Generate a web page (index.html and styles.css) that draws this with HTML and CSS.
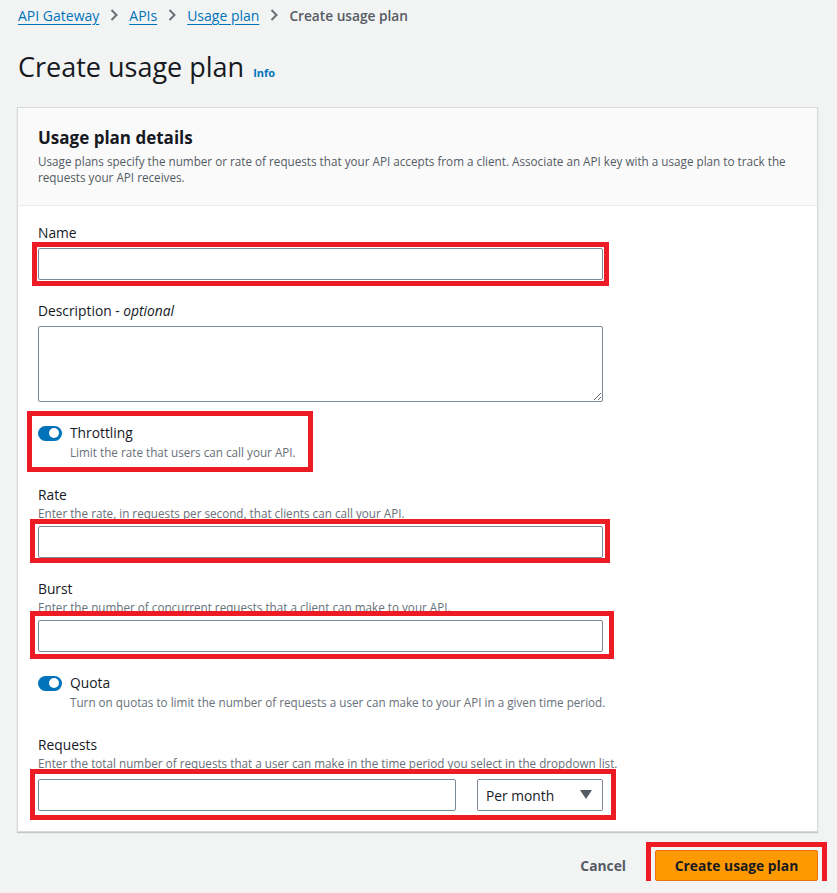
FILE: index.html
```html
<!DOCTYPE html>
<html lang="en">
<head>
<meta charset="utf-8">
<title>Create usage plan</title>
<link rel="stylesheet" href="styles.css">
</head>
<body>
<div class="page">
  <nav class="crumbs">
    <a class="crumb-link" href="#">API Gateway</a>
    <svg class="chev" viewBox="0 0 8 12" width="8" height="12"><path d="M1.5 1 L6.5 6 L1.5 11" fill="none" stroke="#687078" stroke-width="2"/></svg>
    <a class="crumb-link" href="#">APIs</a>
    <svg class="chev" viewBox="0 0 8 12" width="8" height="12"><path d="M1.5 1 L6.5 6 L1.5 11" fill="none" stroke="#687078" stroke-width="2"/></svg>
    <a class="crumb-link" href="#">Usage plan</a>
    <svg class="chev" viewBox="0 0 8 12" width="8" height="12"><path d="M1.5 1 L6.5 6 L1.5 11" fill="none" stroke="#687078" stroke-width="2"/></svg>
    <span class="crumb-current">Create usage plan</span>
  </nav>

  <header class="page-head">
    <h1 class="page-title">Create usage plan</h1>
    <a class="info" href="#">Info</a>
  </header>

  <section class="card">
    <div class="card-head">
      <h2 class="card-title">Usage plan details</h2>
      <p class="card-desc">Usage plans specify the number or rate of requests that your API accepts from a client. Associate an API key with a usage plan to track the requests your API receives.</p>
    </div>
    <div class="card-body">
      <div class="field">
        <label class="label">Name</label>
        <div class="mark mark-name"><input class="input" type="text"></div>
      </div>

      <div class="field">
        <label class="label">Description - <i>optional</i></label>
        <textarea class="textarea"></textarea>
      </div>

      <div class="toggle-field">
        <div class="mark mark-throttle">
          <div class="toggle-row">
            <span class="toggle"><span class="knob"></span></span>
            <span class="toggle-label">Throttling</span>
          </div>
          <div class="toggle-desc">Limit the rate that users can call your API.</div>
        </div>
      </div>

      <div class="field">
        <label class="label">Rate</label>
        <div class="hint">Enter the rate, in requests per second, that clients can call your API.</div>
        <div class="mark mark-rate"><input class="input" type="text"></div>
      </div>

      <div class="field">
        <label class="label">Burst</label>
        <div class="hint">Enter the number of concurrent requests that a client can make to your API.</div>
        <div class="mark mark-burst"><input class="input" type="text"></div>
      </div>

      <div class="toggle-field">
        <div class="toggle-row">
          <span class="toggle"><span class="knob"></span></span>
          <span class="toggle-label">Quota</span>
        </div>
        <div class="toggle-desc">Turn on quotas to limit the number of requests a user can make to your API in a given time period.</div>
      </div>

      <div class="field">
        <label class="label">Requests</label>
        <div class="hint">Enter the total number of requests that a user can make in the time period you select in the dropdown list.</div>
        <div class="mark mark-req">
          <div class="req-row">
            <input class="input input-req" type="text">
            <div class="select">
              <span>Per month</span>
              <svg viewBox="0 0 12 10" width="12" height="10"><path d="M0 0 H12 L6 9 Z" fill="#545b64"/></svg>
            </div>
          </div>
        </div>
      </div>
    </div>
  </section>

  <footer class="actions">
    <button class="btn-cancel" type="button">Cancel</button>
    <div class="mark mark-btn"><button class="btn-primary" type="button">Create usage plan</button></div>
  </footer>
</div>
</body>
</html>
```

FILE: styles.css
```css
*, *::before, *::after { box-sizing: border-box; }
html, body { margin: 0; padding: 0; }
body {
  background: #f2f3f3;
  font-family: "Open Sans", "Noto Sans", Arial, sans-serif;
  color: #16191f;
  font-size: 14px;
}
.page {
  padding: 3px 19px 0 17px;
}
.crumbs {
  display: flex;
  align-items: center;
  gap: 11px;
  height: 24px;
  padding-left: 1px;
  font-size: 14px;
}
.crumb-link {
  color: #0073bb;
  text-decoration: underline;
  text-underline-offset: 3px;
}
.chev { display: block; }
.crumb-current {
  color: #545b64;
  font-weight: 600;
  font-size: 13.7px;
}
.page-head {
  display: flex;
  align-items: baseline;
  gap: 9px;
  margin-top: 22px;
  padding-left: 1px;
}
.page-title {
  margin: 0;
  font-size: 27px;
  font-weight: 400;
  line-height: 36px;
  color: #16191f;
}
.info {
  color: #0073bb;
  font-size: 11px;
  font-weight: 700;
  text-decoration: none;
}
.card {
  margin-top: 22px;
  background: #fff;
  border: 1px solid #d5dbdb;
  box-shadow: 0 1px 1px 0 rgba(0, 28, 36, 0.2);
}
.card-head {
  background: #fafafa;
  border-bottom: 1px solid #eaeded;
  padding: 18px 20px 20px;
}
.card-title {
  margin: 0;
  font-size: 17px;
  font-weight: 700;
  line-height: 24px;
}
.card-desc {
  margin: 3px 0 0;
  font-size: 11.7px;
  line-height: 16px;
  color: #545b64;
}
.card-body {
  padding: 17px 20px 20px;
  display: flex;
  flex-direction: column;
  gap: 21px;
}
.field {
  display: flex;
  flex-direction: column;
}
.label {
  font-size: 13.8px;
  line-height: 20px;
  color: #16191f;
}
.hint {
  font-size: 11.7px;
  line-height: 16px;
  color: #687078;
}
.input {
  display: block;
  width: 565px;
  height: 32px;
  border: 1px solid #7d8998;
  border-radius: 2px;
  background: #fff;
  font: inherit;
  padding: 4px 9px;
}
.field > .label + .mark,
.field > .hint + .mark,
.field > .label + .textarea { margin-top: 5px; }
.field > .hint + .mark-req { margin-top: 8px; }
.textarea {
  display: block;
  width: 565px;
  height: 76px;
  border: 1px solid #7d8998;
  border-radius: 2px;
  font: inherit;
  resize: vertical;
}
.toggle-field {
  display: flex;
  flex-direction: column;
  margin-bottom: 4px;
}
.toggle-row {
  display: flex;
  align-items: center;
  gap: 8px;
  height: 20px;
}
.toggle {
  position: relative;
  display: block;
  width: 24px;
  height: 15px;
  border-radius: 8px;
  background: #0073bb;
}
.knob {
  position: absolute;
  right: 3px;
  top: 2.5px;
  width: 10px;
  height: 10px;
  border-radius: 50%;
  background: #fff;
}
.toggle-label {
  font-size: 13.8px;
  line-height: 20px;
}
.toggle-desc {
  margin-top: 1px;
  padding-left: 32px;
  font-size: 11.7px;
  line-height: 16px;
  color: #687078;
}
.req-row {
  display: flex;
  gap: 21px;
}
.input-req { width: 418px; }
.select {
  width: 126px;
  height: 32px;
  border: 1px solid #7d8998;
  border-radius: 2px;
  display: flex;
  align-items: center;
  justify-content: space-between;
  padding: 0 10px 0 8px;
  font-size: 13.8px;
  color: #16191f;
}
.actions {
  display: flex;
  justify-content: flex-end;
  align-items: center;
  gap: 9px;
  margin-top: 17px;
}
.btn-cancel {
  background: none;
  border: none;
  font: inherit;
  font-weight: 700;
  font-size: 13.8px;
  color: #545b64;
  padding: 0 20px;
  height: 32px;
}
.btn-primary {
  display: block;
  width: 163px;
  height: 31px;
  background: #ff9900;
  border: 1px solid #ec7211;
  border-radius: 2px;
  font: inherit;
  font-weight: 700;
  font-size: 13.8px;
  color: #16191f;
  padding: 0;
}

/* red annotation boxes drawn over content */
.mark { position: relative; }
.mark::after {
  content: "";
  position: absolute;
  border: 5px solid #ed1c24;
  pointer-events: none;
}
.mark-name::after { left: -6px; top: -6px; width: 577px; height: 44px; }
.mark-throttle::after { left: -11px; top: -12px; width: 286px; height: 61px; }
.mark-rate::after { left: -8px; top: -7px; width: 580px; height: 44px; }
.mark-burst::after { left: -8px; top: -9px; width: 584px; height: 48px; }
.mark-req::after { left: -8px; top: -10px; width: 586px; height: 51px; }
.mark-btn::after { left: -9px; top: -8px; width: 181px; height: 47px; }
```
